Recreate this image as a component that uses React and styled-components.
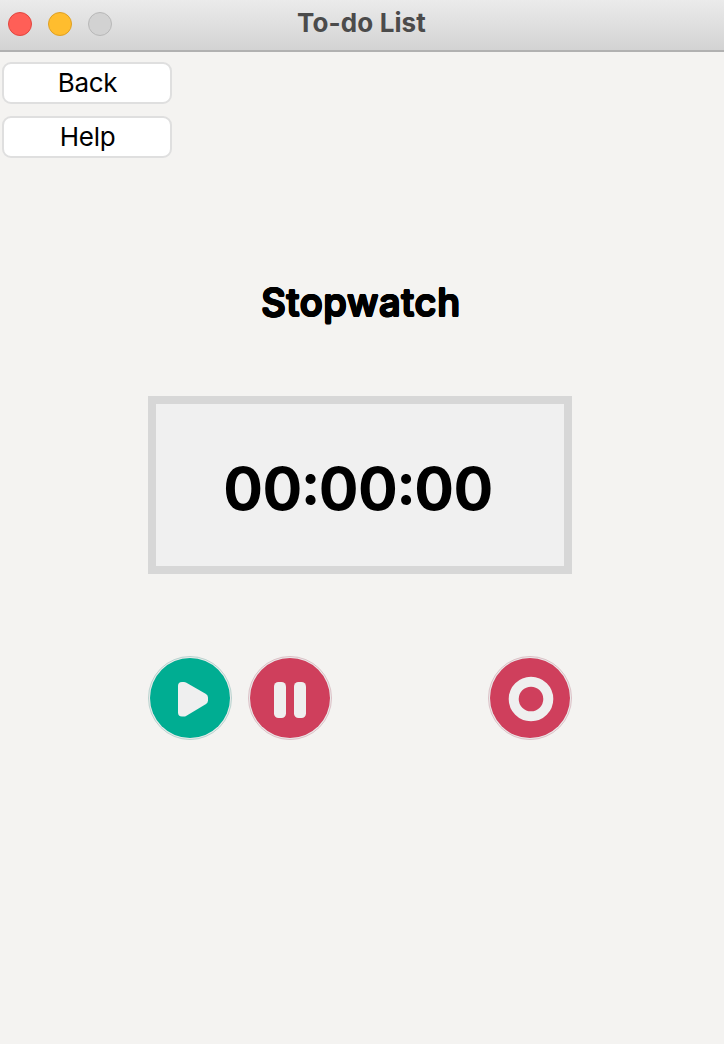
import React from "react";
import styled, { createGlobalStyle } from "styled-components";

const GlobalStyle = createGlobalStyle`
  * { box-sizing: border-box; }
  body { margin: 0; background: #f4f3f1; font-family: Inter, "Liberation Sans", sans-serif; color: #000; }
`;

const Window = styled.div`
  min-height: 100vh;
  background: #f4f3f1;
`;

const TitleBar = styled.header`
  display: grid;
  grid-template-columns: 1fr auto 1fr;
  align-items: center;
  height: 52px;
  padding: 0 9px 2px 8px;
  background: linear-gradient(#ebebeb, #d3d3d3);
  border-bottom: 2px solid #b1b1b1;
`;

const Lights = styled.div`
  display: flex;
  gap: 16px;
`;

const Light = styled.span`
  width: 24px;
  height: 24px;
  border-radius: 50%;
  background: ${(p) => p.$fill};
  border: 1px solid ${(p) => p.$edge};
`;

const Title = styled.span`
  padding-bottom: 2px;
  font-size: 26px;
  line-height: 32px;
  font-weight: 700;
  letter-spacing: 0.1px;
  color: #4b4b4b;
`;

const Nav = styled.nav`
  display: flex;
  flex-direction: column;
  align-items: flex-start;
  gap: 12px;
  padding: 10px 2px 0;
`;

const NavButton = styled.button`
  width: 170px;
  height: 42px;
  padding: 0 0 0 1px;
  background: #fff;
  border: 2px solid #dfdfdf;
  border-radius: 9px;
  font: 400 26px/36px Inter, "Liberation Sans", sans-serif;
  letter-spacing: -0.3px;
  color: #000;
`;

const Panel = styled.main`
  width: 424px;
  margin: 120px 0 0 148px;
`;

const Heading = styled.h1`
  margin: 0;
  padding-left: 2px;
  font-size: 38px;
  line-height: 48px;
  font-weight: 500;
  letter-spacing: 0.7px;
  text-align: center;
  text-shadow: 1px 0 #000, -1px 0 #000, 0 1px #000, 0 -1px #000,
    0.7px 0.7px #000, -0.7px 0.7px #000, 0.7px -0.7px #000, -0.7px -0.7px #000;
`;

const Display = styled.div`
  display: flex;
  align-items: center;
  justify-content: center;
  height: 178px;
  margin-top: 70px;
  padding: 8px 4px 0 0;
  border: 8px solid #d7d7d7;
  background: #f0f0f0;
`;

const Time = styled.time`
  font-size: 59px;
  line-height: 72px;
  font-weight: 700;
  letter-spacing: -0.6px;
`;

const Colon = styled.span`
  vertical-align: 6px;
  line-height: 1;
  margin: 0 -1px;
`;

const Controls = styled.div`
  display: flex;
  gap: 16px;
  margin-top: 82px;
`;

const RoundButton = styled.button`
  width: 84px;
  height: 84px;
  margin-left: ${(p) => (p.$end ? "auto" : 0)};
  padding: 0;
  border: 0;
  background: none;
`;

const Disc = styled.svg`
  display: block;
`;

function Control({ label, color, edge, end, children }) {
  return (
    <RoundButton aria-label={label} $end={end}>
      <Disc width="84" height="84" viewBox="0 0 84 84">
        <circle cx="42" cy="42" r="41.5" fill="#ebebeb" stroke={edge} strokeWidth="0.8" />
        <circle cx="42" cy="42" r="40" fill={color} />
        {children}
      </Disc>
    </RoundButton>
  );
}

export default function App() {
  return (
    <Window>
      <GlobalStyle />
      <TitleBar>
        <Lights>
          <Light $fill="#ff5f57" $edge="#e2463f" />
          <Light $fill="#ffbd2e" $edge="#dfa023" />
          <Light $fill="#d2d2d2" $edge="#b8b8b8" />
        </Lights>
        <Title>To-do List</Title>
      </TitleBar>
      <Nav>
        <NavButton>Back</NavButton>
        <NavButton>Help</NavButton>
      </Nav>
      <Panel>
        <Heading>Stopwatch</Heading>
        <Display>
          <Time>
            00<Colon>:</Colon>00<Colon>:</Colon>00
          </Time>
        </Display>
        <Controls>
          <Control label="Start" color="#00ad92" edge="#a9ccc6">
            <path d="M34 30 H36 L56 41.5 V44.5 L36 56.5 H34 Z" fill="#efefef" stroke="#efefef" strokeWidth="8" strokeLinejoin="round" />
          </Control>
          <Control label="Pause" color="#cf3f5c" edge="#d6b4bb">
            <rect x="26" y="26" width="12" height="36" rx="4.5" fill="#efefef" />
            <rect x="46" y="26" width="12" height="36" rx="4.5" fill="#efefef" />
          </Control>
          <Control label="Reset" color="#cf3f5c" edge="#d6b4bb" end>
            <circle cx="43" cy="43" r="17.3" fill="none" stroke="#efefef" strokeWidth="10" />
          </Control>
        </Controls>
      </Panel>
    </Window>
  );
}
